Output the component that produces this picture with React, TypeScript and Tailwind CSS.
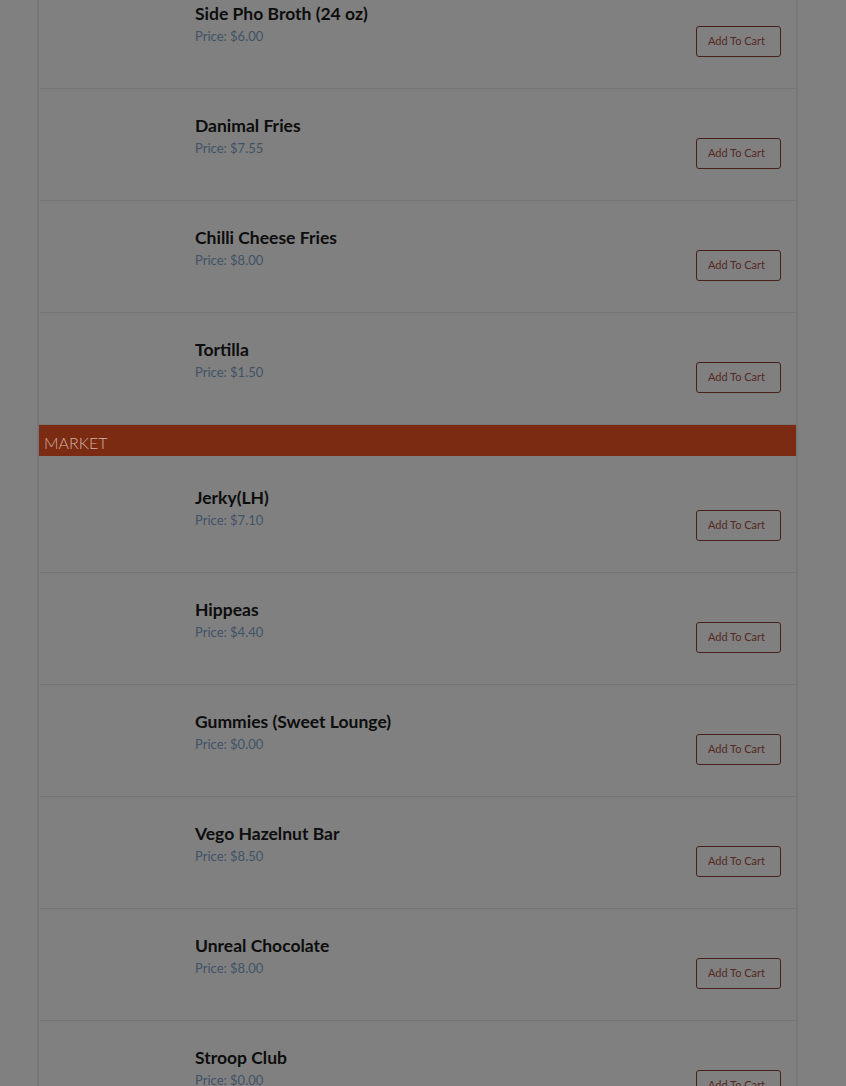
const before = [
  { name: "Side Pho Broth (24 oz)", price: "$6.00" },
  { name: "Danimal Fries", price: "$7.55" },
  { name: "Chilli Cheese Fries", price: "$8.00" },
  { name: "Tortilla", price: "$1.50" },
];

const market = [
  { name: "Jerky(LH)", price: "$7.10" },
  { name: "Hippeas", price: "$4.40" },
  { name: "Gummies (Sweet Lounge)", price: "$0.00" },
  { name: "Vego Hazelnut Bar", price: "$8.50" },
  { name: "Unreal Chocolate", price: "$8.00" },
  { name: "Stroop Club", price: "$0.00" },
];

function Item({ name, price }: { name: string; price: string }) {
  return (
    <div className="flex h-[112px] border-b border-[#767676]">
      <div className="w-[156px] shrink-0" />
      <div className="flex-1 pt-[26px]">
        <h3 className="text-[17.5px] font-bold leading-[22px] text-[#0d0d0d]">{name}</h3>
        <p className="text-[13px] leading-[22px] text-[#415266]">Price: {price}</p>
      </div>
      <button className="mr-[15px] mt-[49px] h-[31px] w-[85px] rounded-[3px] border border-[#47201a] pr-[4px] text-[11px] text-[#55281f]">
        Add To Cart
      </button>
    </div>
  );
}

export default function App() {
  return (
    <div className="h-[1086px] overflow-hidden bg-[#808080] font-['Lato',sans-serif]">
      <div className="-mt-[23px] ml-[37px] w-[761px] border-x-2 border-[#777777]">
        {before.map((it) => (
          <Item key={it.name} {...it} />
        ))}
        <div className="mb-[5px] h-[31px] bg-[#7a2b12] pl-[5px] pt-[6px] text-[16px] font-light uppercase leading-[24px] text-[#d2b0a4]">
          Market
        </div>
        {market.map((it) => (
          <Item key={it.name} {...it} />
        ))}
      </div>
    </div>
  );
}
